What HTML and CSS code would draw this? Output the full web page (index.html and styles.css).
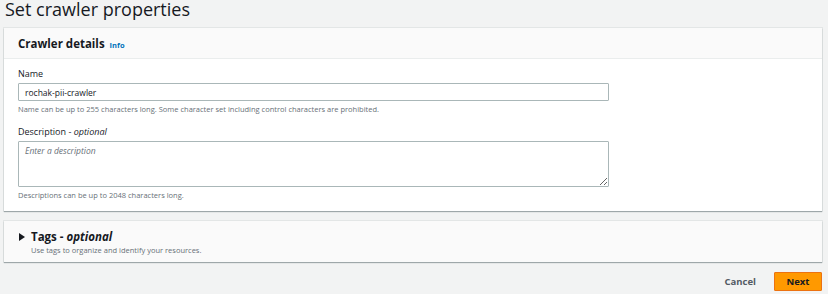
FILE: index.html
```html
<!DOCTYPE html>
<html lang="en">
<head>
    <meta charset="UTF-8">
    <title>Set crawler properties</title>
    <link rel="stylesheet" href="styles.css">
</head>
<body>
    <h1 class="page-title">Set crawler properties</h1>
    <div class="card">
        <div class="card-header">
            <h2>Crawler details</h2>
            <a class="info" href="#">Info</a>
        </div>
        <div class="card-body">
            <div class="field">
                <label>Name</label>
                <input class="text-input" type="text" value="rochak-pii-crawler">
                <p class="hint">Name can be up to 255 characters long. Some character set including control characters are prohibited.</p>
            </div>
            <div class="field">
                <label>Description - <i>optional</i></label>
                <textarea class="text-area" placeholder="Enter a description"></textarea>
                <p class="hint">Descriptions can be up to 2048 characters long.</p>
            </div>
        </div>
    </div>
    <div class="card tags">
        <span class="caret"></span>
        <div>
            <h2>Tags - <i>optional</i></h2>
            <p class="hint">Use tags to organize and identify your resources.</p>
        </div>
    </div>
    <div class="actions">
        <a class="btn-link" href="#">Cancel</a>
        <button class="btn-primary">Next</button>
    </div>
</body>
</html>
```

FILE: styles.css
```css
body {
    margin: 0;
    padding: 0 6px 0 4px;
    background-color: #f2f3f3;
    font-family: "Open Sans", "Noto Sans", sans-serif;
    color: #16191f;
}
.page-title {
    margin: 0 0 10px 1px;
    font-size: 18px;
    font-weight: 400;
    line-height: 18px;
    height: 18px;
}
.card {
    background: #fff;
    box-shadow: 0 1px 1px 0 rgba(0, 22, 30, 0.3), 0 0 0 1px rgba(0, 28, 36, 0.06);
}
.card-header {
    display: flex;
    align-items: baseline;
    gap: 5px;
    height: 31px;
    padding: 0 14px;
    background: #fafafa;
    border-bottom: 1px solid #eaeded;
    box-sizing: border-box;
}
.card-header h2 {
    margin: 0;
    font-size: 11.5px;
    font-weight: 700;
    line-height: 31px;
}
.info {
    color: #0073bb;
    font-size: 7.5px;
    font-weight: 700;
    text-decoration: none;
}
.card-body {
    padding: 8px 14px 10px;
}
.field label {
    display: block;
    font-size: 9px;
    line-height: 13px;
    margin-bottom: 3px;
}
.text-input,
.text-area {
    display: block;
    width: 591px;
    box-sizing: border-box;
    border: 1px solid #aab7b8;
    border-radius: 1px;
    font-family: inherit;
    font-size: 8.5px;
    color: #16191f;
    padding: 0 6px;
    margin: 0;
}
.text-input {
    height: 18px;
}
.text-area {
    height: 46px;
    padding-top: 3px;
    resize: vertical;
}
.text-area::placeholder {
    color: #687078;
    font-style: italic;
}
.hint {
    margin: 3px 0 0;
    font-size: 7.5px;
    line-height: 11px;
    color: #687078;
}
.field + .field {
    margin-top: 10px;
}
.tags {
    display: flex;
    align-items: flex-start;
    gap: 6px;
    margin-top: 10px;
    padding: 8px 14px 8px 15px;
    background: #fafafa;
    height: 41px;
    box-sizing: border-box;
}
.caret {
    width: 0;
    height: 0;
    margin-top: 4px;
    border-top: 4px solid transparent;
    border-bottom: 4px solid transparent;
    border-left: 6px solid #16191f;
}
.tags h2 {
    margin: 0;
    font-size: 11.5px;
    font-weight: 700;
    line-height: 15px;
}
.tags .hint {
    margin-top: 1px;
}
.actions {
    display: flex;
    justify-content: flex-end;
    align-items: center;
    gap: 18px;
    margin-top: 10px;
}
.btn-link {
    color: #545b64;
    font-size: 9.5px;
    font-weight: 700;
    text-decoration: none;
}
.btn-primary {
    width: 48px;
    height: 19px;
    background: #ff9900;
    border: 1px solid #ec7211;
    border-radius: 1px;
    font-family: inherit;
    font-size: 9.5px;
    font-weight: 700;
    color: #16191f;
    padding: 0;
}
```
